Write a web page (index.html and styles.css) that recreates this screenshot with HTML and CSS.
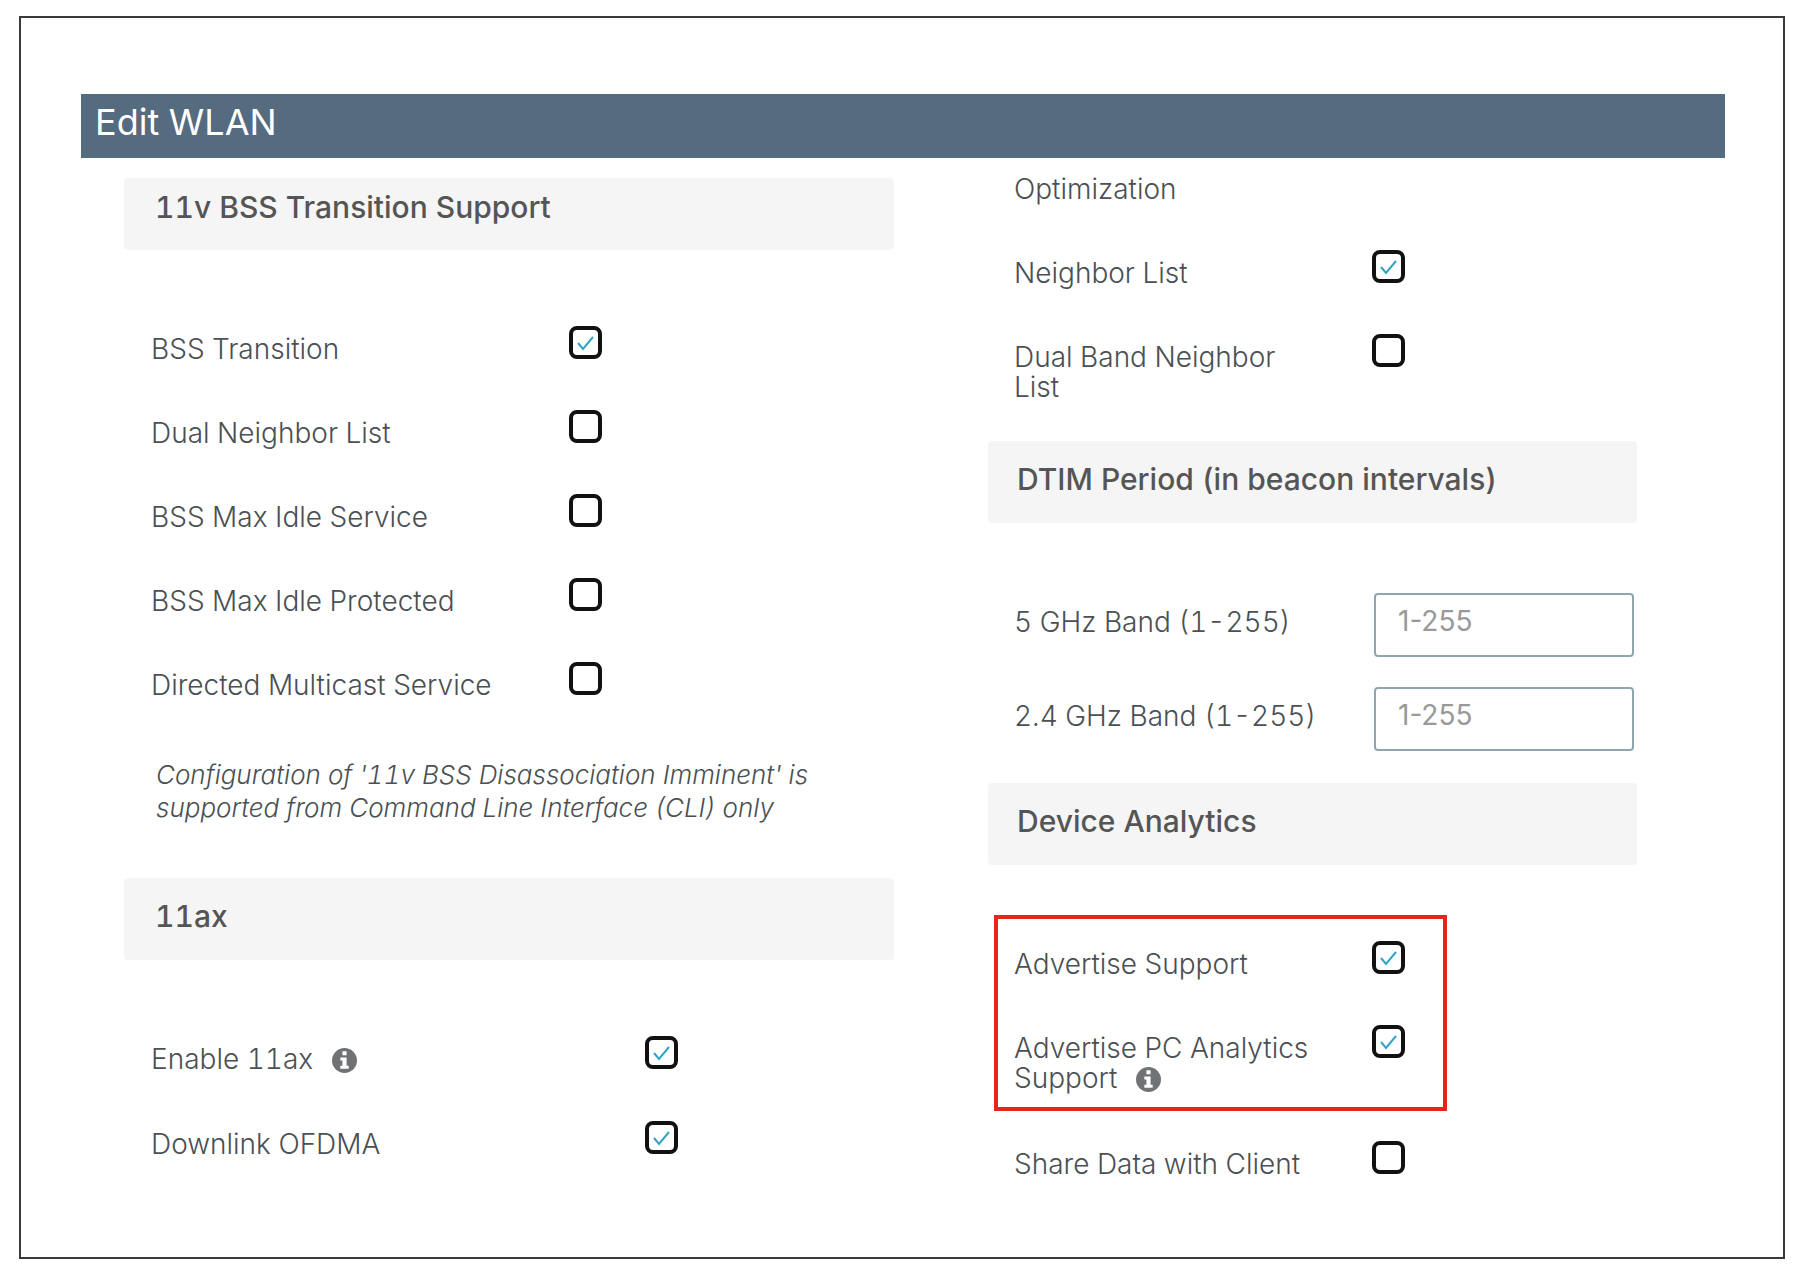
FILE: index.html
```html
<!DOCTYPE html>
<html lang="en">
<head>
    <meta charset="UTF-8">
    <meta name="viewport" content="width=device-width, initial-scale=1.0">
    <title>Edit WLAN</title>
    <link rel="stylesheet" href="styles.css">
</head>
<body>
    <main class="frame">
        <h1 class="title">Edit WLAN</h1>

        <form class="columns">
            <!-- Left column -->
            <div class="column">
                <h2 class="section">11v BSS Transition Support</h2>
                <div class="rows">
                    <div class="row">
                        <label for="bssTransition">BSS Transition</label>
                        <input type="checkbox" id="bssTransition" checked>
                    </div>
                    <div class="row">
                        <label for="dualNeighbor">Dual Neighbor List</label>
                        <input type="checkbox" id="dualNeighbor">
                    </div>
                    <div class="row">
                        <label for="idleService">BSS Max Idle Service</label>
                        <input type="checkbox" id="idleService">
                    </div>
                    <div class="row">
                        <label for="idleProtected">BSS Max Idle Protected</label>
                        <input type="checkbox" id="idleProtected">
                    </div>
                    <div class="row">
                        <label for="multicast">Directed Multicast Service</label>
                        <input type="checkbox" id="multicast">
                    </div>
                </div>
                <p class="note">Configuration of '11v BSS Disassociation Imminent' is<br>supported from Command Line Interface (CLI) only</p>

                <h2 class="section tall">11ax</h2>
                <div class="rows wide">
                    <div class="row">
                        <label for="enable11ax">Enable 11ax
                            <svg class="info" viewBox="0 0 24 24" aria-hidden="true"><circle cx="12" cy="12" r="12"/><path d="M10 3h4v4h-4zM8 9h6v8h2v3H8v-3h2v-5H8z"/></svg>
                        </label>
                        <input type="checkbox" id="enable11ax" checked>
                    </div>
                    <div class="row">
                        <label for="downlink">Downlink OFDMA</label>
                        <input type="checkbox" id="downlink" checked>
                    </div>
                </div>
            </div>

            <!-- Right column -->
            <div class="column right">
                <div class="rows first">
                    <div class="row">
                        <span class="text">Optimization</span>
                    </div>
                    <div class="row">
                        <label for="neighborList">Neighbor List</label>
                        <input type="checkbox" id="neighborList" checked>
                    </div>
                    <div class="row">
                        <label for="dualBand">Dual Band Neighbor<br>List</label>
                        <input type="checkbox" id="dualBand">
                    </div>
                </div>

                <h2 class="section tall">DTIM Period (in beacon intervals)</h2>
                <div class="rows fields">
                    <div class="row">
                        <label for="band5">5 GHz Band (1-255)</label>
                        <input type="text" id="band5" placeholder="1-255">
                    </div>
                    <div class="row">
                        <label for="band24">2.4 GHz Band (1-255)</label>
                        <input type="text" id="band24" placeholder="1-255">
                    </div>
                </div>

                <h2 class="section tall">Device Analytics</h2>
                <div class="highlight">
                    <div class="row">
                        <label for="advertise">Advertise Support</label>
                        <input type="checkbox" id="advertise" checked>
                    </div>
                    <div class="row">
                        <label for="advertisePc">Advertise PC Analytics<br>Support
                            <svg class="info" viewBox="0 0 24 24" aria-hidden="true"><circle cx="12" cy="12" r="12"/><path d="M10 3h4v4h-4zM8 9h6v8h2v3H8v-3h2v-5H8z"/></svg>
                        </label>
                        <input type="checkbox" id="advertisePc" checked>
                    </div>
                </div>
                <div class="rows last">
                    <div class="row">
                        <label for="shareData">Share Data with Client</label>
                        <input type="checkbox" id="shareData">
                    </div>
                </div>
            </div>
        </form>
    </main>
</body>
</html>
```
FILE: styles.css
```css
* {
    margin: 0;
    padding: 0;
    box-sizing: border-box;
}
body {
    display: flex;
    min-height: 100vh;
    padding: 16px 19px;
    background: #fff;
    color: #4a5054;
    font-family: Inter, Roboto, sans-serif;
    font-size: 28px;
    font-variant-numeric: tabular-nums;
    font-weight: 300;
    line-height: 30px;
}
.frame {
    flex: 1;
    padding: 76px 58px 0 60px;
    border: 2px solid #3a3a3a;
}
.title {
    height: 64px;
    padding-left: 14px;
    background: #546b80;
    color: #fff;
    font-size: 36px;
    font-weight: 400;
    line-height: 56px;
}
.columns {
    display: grid;
    grid-template-columns: 770fr 649fr;
    gap: 94px;
    padding: 0 88px 0 43px;
}
.column {
    padding-top: 20px;
    --label: 418px;
}
.right {
    padding-top: 8px;
    --label: 358px;
}
.section {
    height: 72px;
    padding: 14px 31px;
    border-radius: 4px;
    background: #f5f5f5;
    color: #555;
    font-size: 30px;
    font-weight: 500;
}
.tall {
    height: 82px;
    padding-top: 23px;
}
.right .section {
    padding-left: 29px;
}
.rows {
    padding: 76px 3px 0 27px;
}
.wide {
    --label: 494px;
}
.right .rows {
    padding-left: 26px;
}
.row {
    display: grid;
    grid-template-columns: var(--label) 1fr;
    align-items: start;
    min-height: 84px;
}
.row label,
.text {
    padding-top: 8px;
}
.wide .row {
    min-height: 85px;
}
.right .first {
    padding-top: 0;
    padding-bottom: 23px;
}
.right .fields {
    --label: 360px;
    padding-top: 70px;
    padding-bottom: 2px;
}
.fields .row {
    min-height: 94px;
}
.row input[type="text"] {
    height: 64px;
}
.fields .row label {
    padding-top: 14px;
}
.right .last {
    padding-top: 30px;
}
.note {
    padding: 12px 32px 54px;
    font-size: 26px;
    font-style: italic;
    line-height: 33px;
}
.highlight {
    width: 453px;
    margin: 50px 0 0 6px;
    padding: 22px 0 0 16px;
    border: 4px solid #e8241c;
}
.highlight .row + .row {
    min-height: 82px;
}
input[type="checkbox"] {
    appearance: none;
    width: 33px;
    height: 33px;
    border: 4px solid #111;
    border-radius: 8px;
    background: #fff;
}
input[type="checkbox"]:checked {
    background: url("data:image/svg+xml,%3Csvg xmlns='http://www.w3.org/2000/svg' viewBox='0 0 25 25'%3E%3Cpath d='M5 13l5 6L20 7' fill='none' stroke='%232fa4c4' stroke-width='2'/%3E%3C/svg%3E") center / 25px 25px no-repeat;
}
input[type="text"] {
    width: 100%;
    padding: 0 22px 8px;
    border: 2px solid #8fa5b0;
    border-radius: 4px;
    background: #fff;
    color: #4a5054;
    font: inherit;
    font-variant-numeric: normal;
}
input[type="text"]::placeholder {
    color: #999;
    font-weight: 400;
}
.info {
    width: 25px;
    height: 25px;
    margin-left: 11px;
    vertical-align: -4px;
}
.info circle {
    fill: #707375;
}
.info path {
    fill: #fff;
}
```
